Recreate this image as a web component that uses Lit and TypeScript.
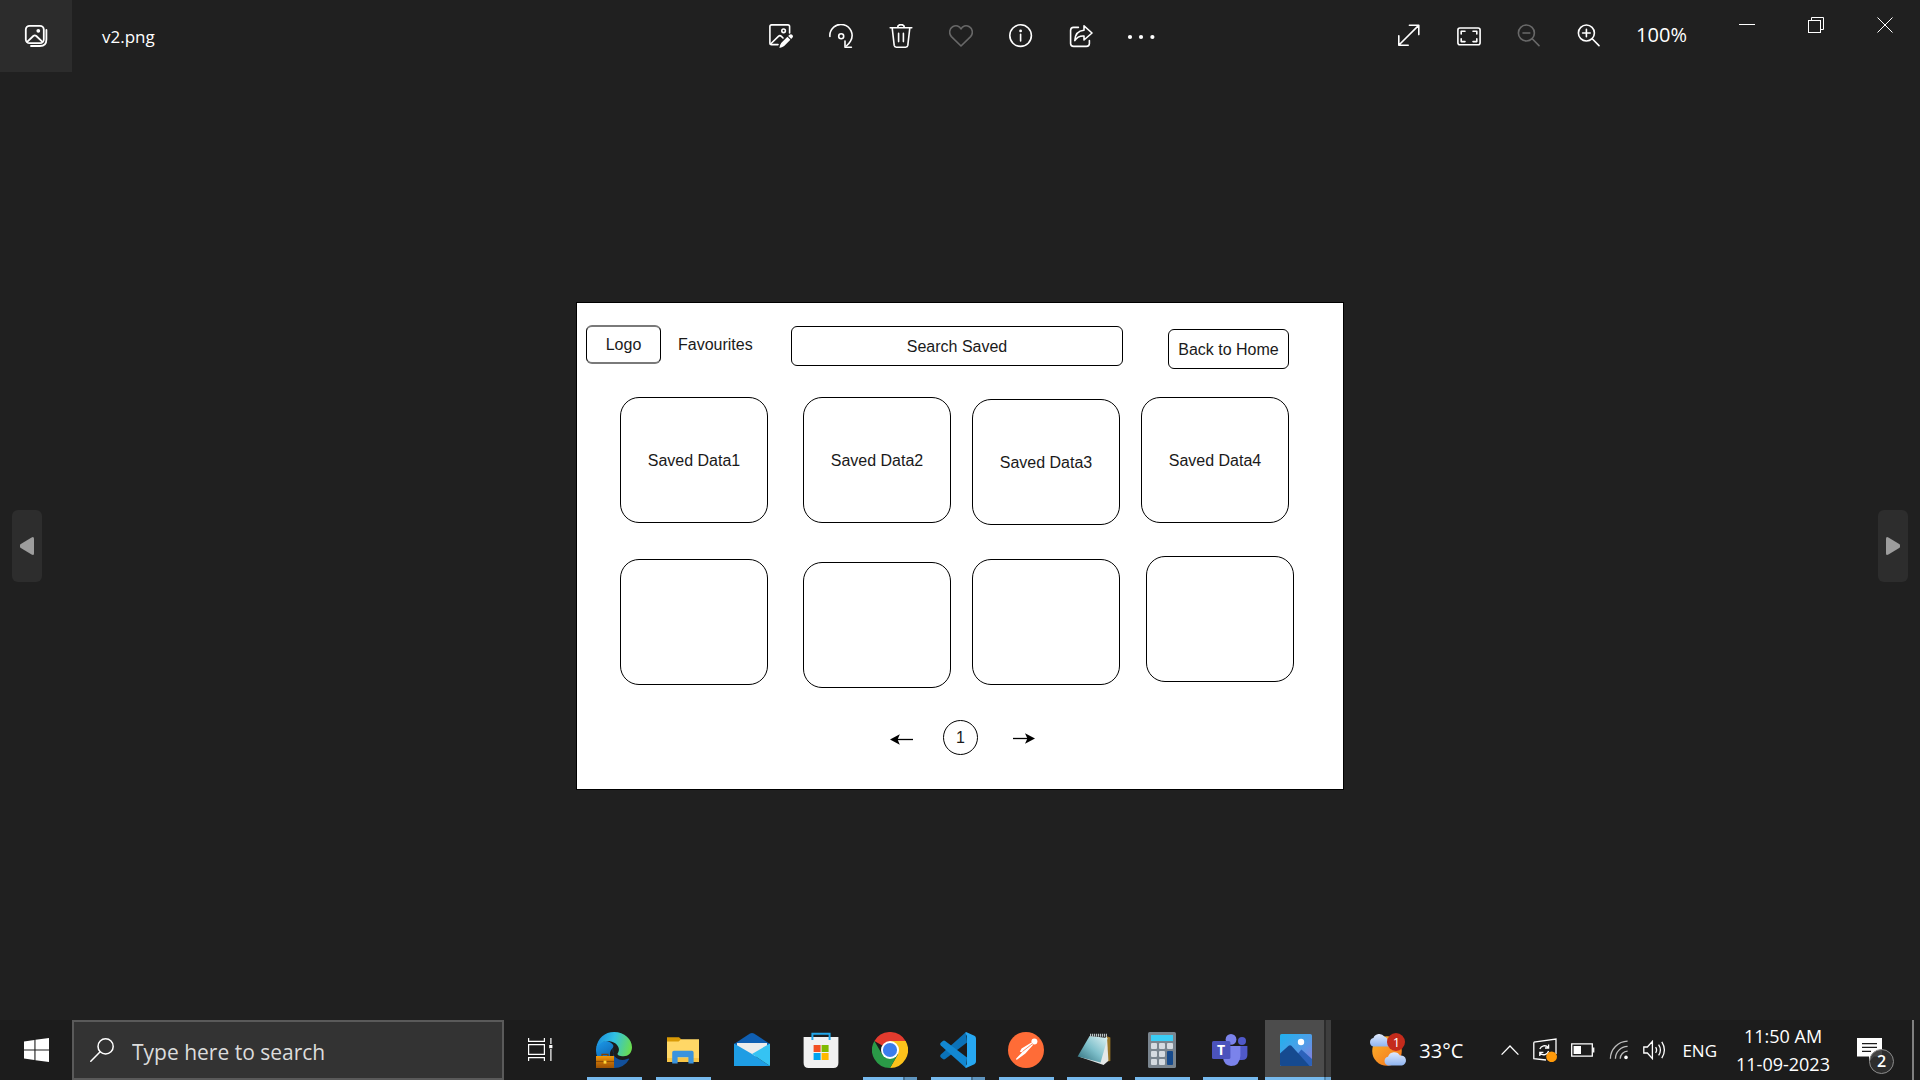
import { LitElement, html, svg, css, nothing, type TemplateResult } from "lit";
import { customElement, property } from "lit/decorators.js";

/* ---------- icons ---------- */

const line = (size: number, body: TemplateResult, width = "1.6") => html`
  <svg width=${size} height=${size} viewBox="0 0 ${size} ${size}" fill="none" stroke="currentColor"
    stroke-width=${width} stroke-linecap="round" stroke-linejoin="round" aria-hidden="true">${body}</svg>`;

const galleryIcon = line(24, svg`
  <rect x="1.8" y="1.8" width="18" height="17.4" rx="3.8"/>
  <path d="M3.4 17.6 9.3 12Q10.8 10.8 12.3 12L18.2 17.6"/>
  <circle cx="14.3" cy="6.8" r="1" fill="currentColor"/>
  <path d="M22.4 6V15.5C22.4 19.5 20 22 16 22H7"/>`, "1.8");

const editIcon = line(24, svg`
  <path d="M20.6 9V2.6Q20.6.9 18.9.9H2.6Q.9.9.9 2.6V18.9Q.9 20.6 2.6 20.6H9"/>
  <path d="M1.6 20 9.4 12.4Q10.9 11 12.4 12.4L14 14"/>
  <circle cx="14.6" cy="6.8" r="1.8"/>
  <path d="M20.4 10.8Q22 9.6 23.4 10.9 24.6 12.4 23.3 13.8L22.2 14.9 19.2 12Z" fill="currentColor" stroke="none"/>
  <path d="M18.4 12.8 21.4 15.7 15.2 22Q13 23.6 10.4 24 10.6 21.2 12.2 19Z" fill="currentColor" stroke="none"/>`);

const rotateIcon = line(24, svg`
  <path d="M.9 12.4A11.1 11.1 0 1 1 21.5 17.2Q20.2 19.6 17.4 22"/>
  <path d="M16 17V23.2H22.4"/>
  <circle cx="12.2" cy="12.2" r="2.5"/>`);

const trashIcon = line(24, svg`
  <path d="M1.2 3.8H22.8M8.6 3.6A3.4 3 0 0 1 15.4 3.6M3.2 4 5.2 21.4Q5.5 23.2 7.3 23.2H16.7Q18.5 23.2 18.8 21.4L20.8 4M9.6 9.4V17.6M14.4 9.4V17.6"/>`);

const heartIcon = line(24, svg`
  <path d="M12 22 2.4 12.6C-.4 9.6.4 4.6 3.6 2.8 7 .8 10.6 2 12 5 13.4 2 17 .8 20.4 2.8 23.6 4.6 24.4 9.6 21.6 12.6Z"/>`);

const infoIcon = line(24, svg`
  <circle cx="11.6" cy="11.6" r="10.8"/><path d="M11.6 10.4V17"/>
  <circle cx="11.6" cy="6.9" r=".6" fill="currentColor"/>`);

const shareIcon = line(24, svg`
  <path d="M9.4 3.4H4.6Q1.6 3.4 1.6 6.4V19.6Q1.6 22.4 4.6 22.4H17.4Q20.4 22.4 20.4 19.6V16.6"/>
  <path d="M15 1.8 23 9 15 16V12Q8.8 11.6 5.8 16.6 6.2 6.8 15 6.2Z"/>`);

const moreIcon = html`
  <svg width="28" height="24" viewBox="0 0 28 24" fill="currentColor" aria-hidden="true">
    <circle cx="3" cy="13" r="2.1"/><circle cx="14" cy="13" r="2.1"/><circle cx="25.4" cy="13" r="2.1"/>
  </svg>`;

const expandIcon = line(24, svg`
  <path d="M12.4 1.2H21.8V10.6M21.4 1.6 2.2 20.8M1.8 11.8V21.2H11.2"/>`);

const fitIcon = line(24, svg`
  <rect x=".9" y="4" width="22.2" height="16.8" rx="2"/>
  <path d="M4.2 10V7.2H8M16 7.2H19.8V10M19.8 14.8V17.6H16M8 17.6H4.2V14.8"/>`);

const zoomOutIcon = line(24, svg`
  <circle cx="9.4" cy="9" r="8"/><path d="M15.2 14.8 22 21.6M6 9H12.8"/>`);

const zoomInIcon = line(24, svg`
  <circle cx="9.4" cy="9" r="8"/><path d="M15.2 14.8 22 21.6M5.6 9H13.2M9.4 5.2V12.8"/>`);

const crisp = (body: TemplateResult) => html`
  <svg width="16" height="16" viewBox="0 0 16 16" fill="none" stroke="currentColor" stroke-width="1" aria-hidden="true">${body}</svg>`;
const minimizeIcon = crisp(svg`<path d="M0 7.5H16"/>`);
const restoreIcon = crisp(svg`<rect x=".5" y="3.5" width="12" height="12"/><path d="M3.5 3V.5H15.5V12.5H13"/>`);
const closeIcon = crisp(svg`<path d="M.5.5 15.5 15.5M15.5.5.5 15.5"/>`);

const windowsIcon = html`
  <svg width="25" height="24" viewBox="0 0 25 24" fill="#fff" aria-hidden="true">
    <path d="M0 3.4 10.4 1.9V11.4H0ZM11.5 1.7 25 0V11.4H11.5ZM0 12.5H10.4V22.1L0 20.6ZM11.5 12.5H25V24L11.5 22.2Z"/>
  </svg>`;

const searchIcon = line(24, svg`<circle cx="15.6" cy="8.4" r="7.6"/><path d="M10.2 13.8.8 23.2"/>`, "1.5");

const taskViewIcon = html`
  <svg width="25" height="24" viewBox="0 0 25 24" fill="none" stroke="#fff" stroke-width="1.2" aria-hidden="true">
    <path d="M.6 0V3.4H16.4V0M.6 23V19.6H16.4V23M.6 6.6H16.4V16.4H.6ZM22.9 0V6M22.9 11V23"/>
    <path d="M21.2 7H24.4V10.2H21.2Z" fill="#fff" stroke="none"/>
  </svg>`;

const app = (body: TemplateResult) => html`
  <svg width="36" height="36" viewBox="0 0 36 36" aria-hidden="true">${body}</svg>`;

const edgeIcon = app(svg`
  <defs>
    <linearGradient id="edge-top" x1="0" y1=".4" x2="1" y2=".6">
      <stop offset="0" stop-color="#1b8fdc"/><stop offset=".45" stop-color="#31c0e4"/><stop offset="1" stop-color="#6bde4c"/>
    </linearGradient>
    <linearGradient id="edge-body" x1="0" y1="0" x2=".4" y2="1">
      <stop offset="0" stop-color="#1c9bea"/><stop offset="1" stop-color="#0c59a4"/>
    </linearGradient>
    <linearGradient id="edge-case" x1="0" y1="0" x2="0" y2="1">
      <stop offset="0" stop-color="#f29a0c"/><stop offset=".5" stop-color="#c46f05"/><stop offset="1" stop-color="#9c5206"/>
    </linearGradient>
  </defs>
  <path d="M18 36A18 18 0 0 0 33.4 27Q32.6 26 31 27 25 29.6 20 25.8 15.6 22 17 15Z" fill="#12509b"/>
  <path d="M0 17C1 10 9 7.4 14 10.2 18 12.4 18.4 14.6 15.4 17.6 12 22 15 30 19 33.6L18 36A18 18 0 0 1 0 17Z" fill="url(#edge-body)"/>
  <path d="M.2 16C1.6 6 9 0 18 0 28.6 0 36 7.6 36 15.2 36 21 32 24.2 27.6 24.2 23.4 24.2 21 23 21.6 21.4 24 18.6 23.2 14.6 19.6 11.6 13 6.4 3.6 9.4.2 16Z" fill="url(#edge-top)"/>
  <path d="M6 24V22.4H12V24" fill="none" stroke="#7c3f05" stroke-width="1.2"/>
  <path d="M0 24H18V36H0Z" fill="url(#edge-case)"/>
  <path d="M0 29.4H18" stroke="#8a4a06" stroke-width="1"/>
  <path d="M7.6 28.6H10.4V31.6H7.6Z" fill="#ffd83a"/>`);

const explorerIcon = app(svg`
  <path d="M2 5.2H14L16.4 7.4 14 10H2Z" fill="#d99a06"/>
  <path d="M2 9.4H13.6L16 7.2H34V30H2Z" fill="#ffd766"/>
  <path d="M2 26H34V30H2Z" fill="#f8c546"/>
  <path d="M7.2 31.6V20.6Q7.2 18.8 9 18.8H27Q28.6 18.8 28.6 20.6V31.6H23.4V25.2H12.6V31.6Z" fill="#3a93dd"/>`);

const mailIcon = app(svg`
  <path d="M0 12 16 1.6Q18 .6 20 1.6L36 12 18 24Z" fill="#0f5fb3"/>
  <path d="M3 11H33V20L18 26 3 20Z" fill="#ececec"/>
  <path d="M0 11.4 18 22 36 34H0Z" fill="#1e9de4"/>
  <path d="M36 11.4V34L18 22Z" fill="#35c3f3"/>`);

const storeIcon = app(svg`
  <path d="M.6 5H35.4V31Q35.4 36 30.4 36H5.6Q.6 36 .6 31Z" fill="#f1f1f1"/>
  <path d="M9.4 8V1.8H26.6V8" fill="none" stroke="#22a7ea" stroke-width="2"/>
  <path d="M10.6 13H17.6V20H10.6Z" fill="#f25022"/><path d="M18.6 13H25.6V20H18.6Z" fill="#7fba00"/>
  <path d="M10.6 21H17.6V28H10.6Z" fill="#00a4ef"/><path d="M18.6 21H25.6V28H18.6Z" fill="#ffb900"/>`);

const chromeIcon = app(svg`
  <path d="M18 18 2.4 9A18 18 0 0 1 33.6 9Z" fill="#e33b2e"/>
  <path d="M18 9H33.6A18 18 0 0 1 18 36L25.8 22.5Z" fill="#fcc21b"/>
  <path d="M25.8 22.5 18 36A18 18 0 0 1 2.4 9L10.2 22.5Z" fill="#2a9a47"/>
  <path d="M18 9H33.6L26 18Z" fill="#fcc21b"/>
  <circle cx="18" cy="18" r="9" fill="#fff"/><circle cx="18" cy="18" r="7.1" fill="#3b7ded"/>`);

const codeIcon = app(svg`
  <path d="M26 0 .8 22.6Q-.4 24 .8 25.2L2.8 27Q4 27.8 5.2 27L27 10.4Z" fill="#0b72b8"/>
  <path d="M26 36 .8 13.4Q-.4 12 .8 10.8L2.8 9Q4 8.2 5.2 9L27 25.6Z" fill="#1288d2"/>
  <path d="M26 0 34.4 3.8Q36 4.6 36 6.4V29.6Q36 31.4 34.4 32.2L26 36Q24.8 35.4 27 32V4Q24.8.6 26 0Z" fill="#27a8f2"/>`);

const postmanIcon = app(svg`
  <circle cx="18" cy="18" r="18" fill="#ff6c37"/>
  <circle cx="26.4" cy="9.6" r="3" fill="#fff"/>
  <path d="M23.4 10.4 13.6 16.6 11.8 19.8 14.2 20.2 8 26.8 8.6 28 17.4 21.6 25 13Z" fill="#fff"/>
  <path d="M14.4 19.6 24.6 11.6" stroke="#ff6c37" stroke-width=".8"/>`);

const notepadIcon = app(svg`
  <defs><linearGradient id="note" x1="0" y1="1" x2="1" y2="0">
    <stop offset="0" stop-color="#2b6a78"/><stop offset=".5" stop-color="#7fc0cb"/><stop offset="1" stop-color="#e3f4f6"/>
  </linearGradient></defs>
  <path d="M30 4 34.4 5.4V29L31 29.6Z" fill="#9a7527"/>
  <path d="M31 4.6 32.4 28.8 27.6 33 4 25Z" fill="#e5e8e8"/>
  <path d="M13.6 4 31.6 6 24.6 30.4 1.6 24.4Z" fill="url(#note)"/>
  <path d="M14 3.2H31" stroke="#b9c2c4" stroke-width="3" stroke-dasharray="1.2 .8"/>`);

const calculatorIcon = app(svg`
  <rect x="4" y="0" width="28" height="36" rx="1.6" fill="#7a858f"/>
  <path d="M7 3H29V9H7Z" fill="#3bcdf5"/>
  <g fill="#d5dbe1">
    <rect x="7" y="11" width="6" height="6" rx="1"/><rect x="15" y="11" width="6" height="6" rx="1"/><rect x="23" y="11" width="6" height="6" rx="1"/>
    <rect x="7" y="19" width="6" height="6" rx="1"/><rect x="15" y="19" width="6" height="6" rx="1"/>
    <rect x="7" y="27" width="6" height="6" rx="1"/><rect x="15" y="27" width="6" height="6" rx="1"/>
  </g>
  <rect x="23" y="19" width="6" height="14" rx="1" fill="#164a8c"/>`);

const teamsIcon = html`
  <span class="teams">
    ${app(svg`
      <circle cx="30" cy="9" r="4" fill="#5059c9"/>
      <path d="M26 14H35.4V23Q35.4 28 30 28H26Z" fill="#5059c9"/>
      <circle cx="19" cy="7.4" r="5.4" fill="#7b83eb"/>
      <path d="M11 14H28.4V24Q27.6 34 19 34 12 33.4 11 26Z" fill="#7b83eb"/>
      <rect x="0" y="9" width="18.4" height="18" rx="1.6" fill="#4b53bc"/>`)}
    <b>T</b>
  </span>`;

const photosIcon = app(svg`
  <defs><linearGradient id="sky" x1="0" y1="0" x2="1" y2="1">
    <stop offset="0" stop-color="#1fb1ee"/><stop offset=".5" stop-color="#4c9fe8"/><stop offset="1" stop-color="#8f78dc"/>
  </linearGradient></defs>
  <rect x="2" y="2" width="32" height="32" rx="1.6" fill="url(#sky)"/>
  <path d="M18 24 23.4 17.6 34 27V32.4Q34 34 32.4 34H18Z" fill="#2c62bb"/>
  <path d="M2 21.6 10.6 13.8Q12 12.6 13.4 13.8L31.6 34H3.6Q2 34 2 32.4Z" fill="#164a90"/>
  <circle cx="23" cy="10" r="3.2" fill="#fff"/>`);

const weatherIcon = html`
  <svg width="38" height="34" viewBox="0 0 38 34" aria-hidden="true">
    <defs>
      <linearGradient id="sun" x1="0" y1="0" x2="1" y2="1"><stop offset="0" stop-color="#fdb52a"/><stop offset="1" stop-color="#f2701d"/></linearGradient>
      <linearGradient id="cloud" x1="0" y1="0" x2="0" y2="1"><stop offset="0" stop-color="#dfeafd"/><stop offset="1" stop-color="#8fb4f0"/></linearGradient>
    </defs>
    <circle cx="18" cy="18" r="14.8" fill="url(#sun)"/>
    <path d="M4.6 13.6A4.4 4.4 0 0 1 4.4 5 6.4 6.4 0 0 1 15.4 3.6Q20 5 20 13.6Z" fill="url(#cloud)"/>
    <path d="M19 32.4A4.4 4.4 0 0 1 19 23.8 6.6 6.6 0 0 1 31 22.6 5 5 0 0 1 33 32.4Z" fill="url(#cloud)"/>
  </svg>`;

const tray = (w: number, h: number, body: TemplateResult) => html`
  <svg width=${w} height=${h} viewBox="0 0 ${w} ${h}" fill="none" stroke="#fff" stroke-width="1.3" aria-hidden="true">${body}</svg>`;

const chevronIcon = tray(18, 12, svg`<path d="M.6 10.6 9 2 17.4 10.6"/>`);
const syncIcon = tray(24, 24, svg`
  <path d="M.8 4.2 23 1V16M.8 4.2V20.6L13 22"/>
  <path d="M6.8 11A5 5 0 0 1 15.2 9.4M15.6 6.4V10H12M15.6 13A5 5 0 0 1 7.2 15.2M6.8 18V14.4H10.4"/>
  <circle cx="18.6" cy="18.8" r="5.4" fill="#ff9a0a" stroke="none"/>`);
const batteryIcon = tray(24, 14, svg`
  <path d="M.7.9H21.3V13.1H.7ZM22.7 4.6V9.4"/><path d="M2.6 3H10V11H2.6Z" fill="#fff" stroke="none"/>`);
const wifiIcon = tray(20, 20, svg`
  <g stroke="#bdbdbd"><path d="M1.4 18.8A17.6 17.6 0 0 1 18.6 1.2M6.4 18.8A12.4 12.4 0 0 1 18.6 6.4M11.2 18.8A7.6 7.6 0 0 1 18.6 11.2"/></g>
  <circle cx="17" cy="17.4" r="1.8" fill="#fff" stroke="none"/>`);
const volumeIcon = tray(24, 20, svg`
  <path d="M.8 7H4.4L9.4 1.4V18.6L4.4 13H.8ZM12.6 7.2Q14.6 10 12.6 12.8M15.6 4.6Q19.2 10 15.6 15.4M18.8 1.8Q24 10 18.8 18.2"/>`);
const noticeIcon = html`
  <svg width="25" height="24" viewBox="0 0 25 24" aria-hidden="true">
    <path d="M0 0H25V18.6H17L12 23.6V18.6H0Z" fill="#fff"/>
    <path d="M5 5.6H20M5 9.4H20M5 13.4H14" stroke="#1c1c1c" stroke-width="1.2"/>
  </svg>`;

/* ---------- wireframe canvas ---------- */

type NodeKind = "box" | "label" | "field" | "button" | "card" | "page" | "prev" | "next";
interface CanvasNode { kind: NodeKind; x: number; y: number; text?: string; }

const NODES: CanvasNode[] = [
  { kind: "box", x: 9, y: 22, text: "Logo" },
  { kind: "label", x: 101, y: 22, text: "Favourites" },
  { kind: "field", x: 214, y: 23, text: "Search Saved" },
  { kind: "button", x: 591, y: 26, text: "Back to Home" },
  { kind: "card", x: 43, y: 94, text: "Saved Data1" },
  { kind: "card", x: 226, y: 94, text: "Saved Data2" },
  { kind: "card", x: 395, y: 96, text: "Saved Data3" },
  { kind: "card", x: 564, y: 94, text: "Saved Data4" },
  { kind: "card", x: 43, y: 256 },
  { kind: "card", x: 226, y: 259 },
  { kind: "card", x: 395, y: 256 },
  { kind: "card", x: 569, y: 253 },
  { kind: "prev", x: 313, y: 431 },
  { kind: "page", x: 366, y: 417, text: "1" },
  { kind: "next", x: 435, y: 430 },
];

const arrow = (d: string, shaft: string) => html`
  <svg width="23" height="11" viewBox="0 0 23 11" aria-hidden="true">
    <path d=${shaft} stroke="#000" stroke-width="1.3"/><path d=${d} fill="#000"/>
  </svg>`;

@customElement("wire-canvas")
export class WireCanvas extends LitElement {
  static styles = css`
    :host { display: block; position: relative; box-sizing: border-box; width: 768px; height: 488px;
      border: 1px solid #000; background: #fff; color: #000; font: 16px/20px "Liberation Sans", Arial, sans-serif; }
    .node { position: absolute; display: flex; align-items: center; justify-content: center; box-sizing: border-box;
      margin: 0; padding: 0; border: 1px solid #000; border-radius: 6px; background: none; color: #1a1a1a; font: inherit; }
    .box { width: 75px; height: 39px; border-width: 2px 1px; border-color: #7a7a7a #000; }
    .label { height: 39px; border: 0; }
    .field { width: 332px; height: 40px; padding-top: 2px; text-align: center; outline: none; appearance: none; }
    .field::placeholder { color: #1a1a1a; opacity: 1; }
    .button { width: 121px; height: 40px; padding-top: 2px; }
    .card { width: 148px; height: 126px; padding-top: 2px; border-radius: 19px; }
    .page { width: 35px; height: 35px; border-radius: 50%; }
    .prev, .next { border: 0; }
    .prev svg, .next svg { display: block; }
  `;

  private draw(n: CanvasNode) {
    const at = `left:${n.x}px;top:${n.y}px`;
    switch (n.kind) {
      case "field":
        return html`<input class="node field" type="text" aria-label=${n.text!} placeholder=${n.text!} style=${at} />`;
      case "button":
      case "page":
        return html`<button class="node ${n.kind}" style=${at}>${n.text}</button>`;
      case "prev":
        return html`<button class="node prev" aria-label="Previous page" style=${at}>${arrow("M0 5.5 9.8.3 7.6 5.5 9.8 10.7Z", "M6 5.5H23")}</button>`;
      case "next":
        return html`<button class="node next" aria-label="Next page" style=${at}>${arrow("M23 5.5 13 .3 15.4 5.5 13 10.7Z", "M1 5.5H17")}</button>`;
      default:
        return html`<div class="node ${n.kind}" style=${at}>${n.text ?? nothing}</div>`;
    }
  }

  render() {
    return NODES.map((n) => this.draw(n));
  }
}

/* ---------- photo viewer ---------- */

const TOOLS = [
  { label: "Edit image", icon: editIcon },
  { label: "Rotate", icon: rotateIcon },
  { label: "Delete", icon: trashIcon },
  { label: "Add to favourites", icon: heartIcon, dim: true },
  { label: "File info", icon: infoIcon },
  { label: "Share", icon: shareIcon },
  { label: "See more", icon: moreIcon },
];

const ZOOMS = [
  { label: "Full screen", icon: expandIcon },
  { label: "Zoom to fit", icon: fitIcon },
  { label: "Zoom out", icon: zoomOutIcon, dim: true },
  { label: "Zoom in", icon: zoomInIcon },
];

const WINDOW = [
  { label: "Minimize", icon: minimizeIcon },
  { label: "Restore", icon: restoreIcon },
  { label: "Close", icon: closeIcon },
];

@customElement("photo-viewer")
export class PhotoViewer extends LitElement {
  static styles = css`
    :host { display: flex; flex-direction: column; background: #202020; color: #fff; }
    button { display: flex; align-items: center; justify-content: center; margin: 0; padding: 0; border: 0;
      background: none; color: inherit; }
    svg { display: block; }
    .bar { display: grid; grid-template-columns: 1fr auto 1fr; height: 72px; }
    .side { display: flex; align-items: center; }
    .home { width: 72px; height: 72px; background: #2c2c2c; }
    .title { margin: 0; padding: 2px 0 0 30px; font-size: 17px; font-weight: 400; line-height: 24px; }
    .tools { display: flex; padding-left: 2px; }
    .tool { width: 60px; height: 72px; }
    .dim { color: #686868; }
    .end { justify-content: flex-end; padding-right: 1px; }
    .percent { width: 93px; padding: 0 8px 2px 0; box-sizing: border-box; text-align: center; font-size: 20px; line-height: 24px; }
    .window { display: flex; align-self: flex-start; }
    .control { width: 69px; height: 49px; }
    .stage { flex: 1; display: flex; align-items: center; justify-content: space-between; padding: 0 12px; }
    .step { width: 30px; height: 72px; border-radius: 6px; background: #2d2d2d; color: #9d9d9d; }
  `;

  render() {
    const tool = (t: { label: string; icon: unknown; dim?: boolean }) =>
      html`<button class="tool ${t.dim ? "dim" : ""}" aria-label=${t.label}>${t.icon}</button>`;
    return html`
      <header class="bar">
        <div class="side">
          <button class="home" aria-label="All photos">${galleryIcon}</button>
          <h1 class="title">v2.png</h1>
        </div>
        <div class="tools">${TOOLS.map(tool)}</div>
        <div class="side end">
          ${ZOOMS.map(tool)}
          <span class="percent">100%</span>
          <div class="window">
            ${WINDOW.map((w) => html`<button class="control" aria-label=${w.label}>${w.icon}</button>`)}
          </div>
        </div>
      </header>
      <main class="stage">
        <button class="step" aria-label="Previous photo">
          <svg width="14" height="18" viewBox="0 0 14 18"><path d="M.4 7.2Q-.6 9 .4 10.8L11.6 17.6Q14 18.6 14 16.4V1.6Q14-.6 11.6.4Z" fill="currentColor"/></svg>
        </button>
        <wire-canvas></wire-canvas>
        <button class="step" aria-label="Next photo">
          <svg width="14" height="18" viewBox="0 0 14 18"><path d="M13.6 7.2Q14.6 9 13.6 10.8L2.4 17.6Q0 18.6 0 16.4V1.6Q0-.6 2.4.4Z" fill="currentColor"/></svg>
        </button>
      </main>`;
  }
}

/* ---------- taskbar ---------- */

interface TaskApp { name: string; icon: unknown; state?: "open" | "stack" | "active"; }

const PINNED: TaskApp[] = [
  { name: "Microsoft Edge", icon: edgeIcon, state: "open" },
  { name: "File Explorer", icon: explorerIcon, state: "open" },
  { name: "Mail", icon: mailIcon },
  { name: "Microsoft Store", icon: storeIcon },
  { name: "Google Chrome", icon: chromeIcon, state: "stack" },
];

const RUNNING: TaskApp[] = [
  { name: "Visual Studio Code", icon: codeIcon, state: "stack" },
  { name: "Postman", icon: postmanIcon, state: "open" },
  { name: "Notepad", icon: notepadIcon, state: "open" },
  { name: "Calculator", icon: calculatorIcon, state: "open" },
  { name: "Microsoft Teams", icon: teamsIcon, state: "open" },
  { name: "Photos", icon: photosIcon, state: "active" },
];

@customElement("task-bar")
export class TaskBar extends LitElement {
  @property({ type: Number }) notices = 2;

  static styles = css`
    :host { display: flex; height: 60px; background: #1c1c1c; color: #fff; }
    button { display: flex; align-items: center; justify-content: center; flex: none; margin: 0; padding: 0; border: 0;
      background: none; color: inherit; font: inherit; }
    svg { display: block; flex: none; }
    .start { width: 72px; }
    .search { display: flex; align-items: center; gap: 18px; box-sizing: border-box; width: 432px; padding: 0 16px;
      border: 2px solid #5a5a5a; background: #333; color: #fff; }
    .query { flex: 1; min-width: 0; margin: 0; padding: 4px 0 0; border: 0; outline: none; background: none; color: #fff;
      font: inherit; font-size: 21px; line-height: 28px; }
    .query::placeholder { color: #dcdcdc; opacity: 1; }
    .view { width: 72px; margin-right: 4px; }
    .apps { display: flex; }
    .app { width: 69px; height: 60px; border-bottom: 3px solid transparent; padding: 3px 2px 0 0; box-sizing: border-box;
      background-origin: border-box; background-repeat: no-repeat; }
    .running .app { width: 68px; }
    .open { background-image: linear-gradient(#76b9ed, #76b9ed); background-size: 55px 3px; background-position: 7px 57px; }
    .stack { background-image: linear-gradient(90deg, #76b9ed 40px, #47708f 40px 42px, #5f95bf 42px);
      background-size: 54px 3px; background-position: 7px 57px; }
    .running .open, .running .stack { background-position: 6px 57px; }
    .running .active { width: 66px; padding-right: 4px;
      background: linear-gradient(90deg, #76b9ed 59px, #5286ad 59px 61px, #6ba6d5 61px) 0 57px / 66px 3px no-repeat border-box,
        linear-gradient(90deg, #4c4c4c 59px, #2c2c2c 59px 61px, #3e3e3e 61px) 0 0 / 66px 60px no-repeat border-box; }
    .teams { position: relative; display: block; }
    .teams b { position: absolute; left: 0; top: 9px; width: 18px; text-align: center; font-size: 14px; line-height: 18px; }
    .tray { display: flex; align-items: center; margin-left: auto; }
    .weather { gap: 12px; margin-right: 38px; font-size: 20px; line-height: 28px; }
    .degrees { padding-top: 2px; }
    .sky { position: relative; }
    .alert { position: absolute; left: 18px; top: 0; width: 18px; height: 18px; border-radius: 50%; background: #c42b1c;
      font-size: 13px; line-height: 18px; }
    .icons { display: flex; align-items: center; gap: 14px; }
    .lang { margin: 0 19px 0 15px; padding-top: 2px; font-size: 17px; line-height: 28px; }
    .clock { display: flex; flex-direction: column; align-items: center; width: 94px; font-size: 18px; line-height: 28px; }
    .notices { position: relative; margin: 0 30px 0 27px; }
    .count { position: absolute; left: 12px; top: 11px; box-sizing: border-box; width: 25px; height: 25px;
      border: 1px solid #8c8c8c; border-radius: 50%; background: rgba(48, 48, 48, 0.9); font-size: 16px; font-weight: 600;
      line-height: 23px; text-align: center; }
    .desktop { align-self: stretch; width: 8px; border-left: 2px solid #808080; }
  `;

  private app(a: TaskApp) {
    return html`<button class="app ${a.state ?? ""}" aria-label=${a.name}>${a.icon}</button>`;
  }

  render() {
    return html`
      <button class="start" aria-label="Start">${windowsIcon}</button>
      <label class="search">
        ${searchIcon}
        <input class="query" type="text" aria-label="Type here to search" placeholder="Type here to search" />
      </label>
      <button class="view" aria-label="Task view">${taskViewIcon}</button>
      <nav class="apps">${PINNED.map((a) => this.app(a))}</nav>
      <nav class="apps running">${RUNNING.map((a) => this.app(a))}</nav>
      <div class="tray">
        <button class="weather">
          <span class="sky">${weatherIcon}<span class="alert">1</span></span>
          <span class="degrees">33°C</span>
        </button>
        <div class="icons">
          <button aria-label="Show hidden icons">${chevronIcon}</button>
          <button aria-label="Updates">${syncIcon}</button>
          <button aria-label="Battery">${batteryIcon}</button>
          <button aria-label="Network">${wifiIcon}</button>
          <button aria-label="Volume">${volumeIcon}</button>
        </div>
        <button class="lang">ENG</button>
        <button class="clock"><span>11:50 AM</span><span>11-09-2023</span></button>
        <button class="notices" aria-label="Notifications">${noticeIcon}<span class="count">${this.notices}</span></button>
        <button class="desktop" aria-label="Show desktop"></button>
      </div>`;
  }
}

@customElement("app-root")
export class AppRoot extends LitElement {
  static styles = css`
    :host { display: flex; flex-direction: column; min-height: 100vh; background: #202020;
      font-family: "Open Sans", "Noto Sans", sans-serif; }
    .viewer { flex: 1; }
  `;

  render() {
    return html`<photo-viewer class="viewer"></photo-viewer><task-bar></task-bar>`;
  }
}
